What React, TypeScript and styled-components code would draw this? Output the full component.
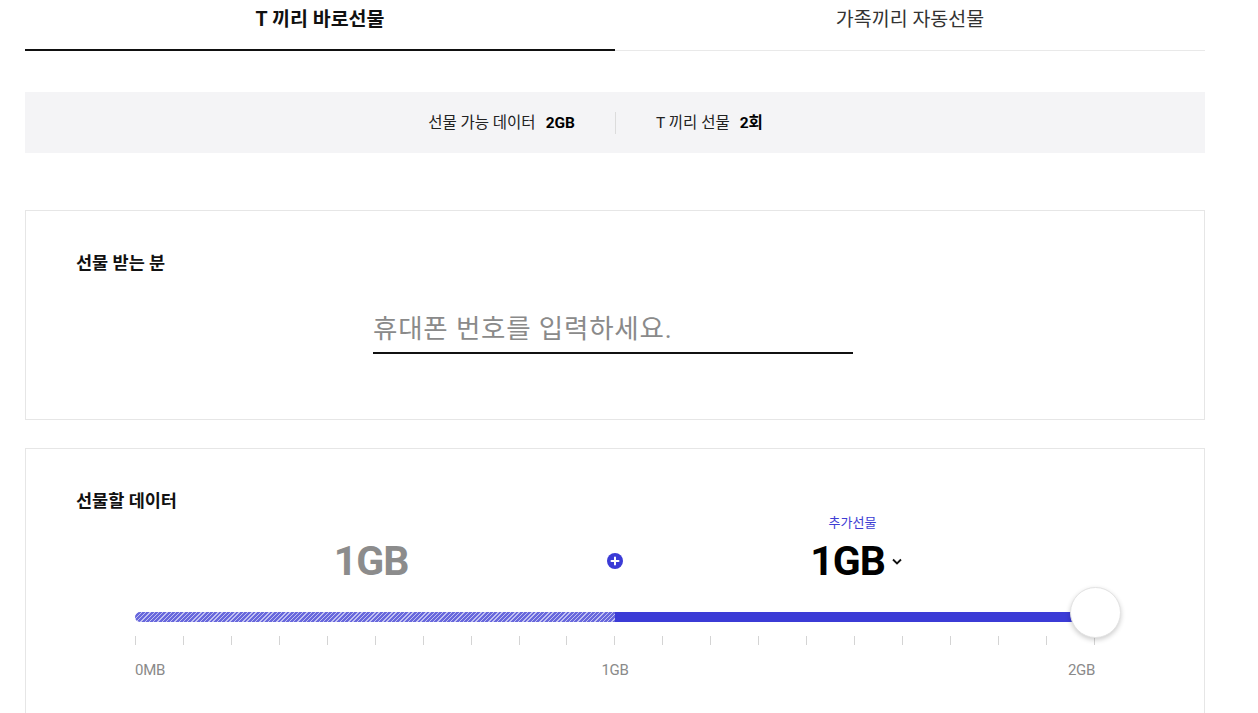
import React from "react";
import styled, { createGlobalStyle } from "styled-components";

const GlobalStyle = createGlobalStyle`
  html, body { margin: 0; padding: 0; background: #fff; }
  body { font-family: Roboto, "Noto Sans CJK KR", "Noto Sans", sans-serif; color: #111; }
  * { box-sizing: border-box; }
`;

const Page = styled.div`
  padding: 0 53px 0 25px;
`;

const Tabs = styled.div`
  display: flex;
  align-items: flex-end;
`;

const Tab = styled.div<{ $active?: boolean }>`
  flex: 1;
  text-align: center;
  font-size: 19.5px;
  line-height: 40px;
  font-weight: ${(p) => (p.$active ? 700 : 400)};
  color: ${(p) => (p.$active ? "#111" : "#333")};
  padding-bottom: ${(p) => (p.$active ? "9px" : "10px")};
  border-bottom: ${(p) => (p.$active ? "2px solid #111" : "1px solid #e9e9e9")};
`;

const InfoBox = styled.div`
  margin-top: 41px;
  height: 61px;
  background: #f4f4f6;
  display: grid;
  grid-template-columns: 1fr 1fr;
  align-items: center;
`;

const InfoItem = styled.div`
  display: flex;
  align-items: center;
  justify-content: flex-end;
  gap: 10px;
  padding: 0 40px;
  font-size: 15.5px;
  line-height: 22px;
  color: #222;
  & + & {
    justify-content: flex-start;
    border-left: 1px solid #dcdcdc;
  }
`;

const InfoValue = styled.b`
  font-weight: 700;
  color: #000;
`;

const Card = styled.section<{ $gap: number }>`
  margin-top: ${(p) => p.$gap}px;
  border: 1px solid #e6e6e6;
  padding: 40px 50px 0;
`;

const CardTitle = styled.h3`
  margin: 0;
  font-size: 17.5px;
  line-height: 24px;
  font-weight: 700;
  color: #111;
`;

const InputWrap = styled.div`
  display: flex;
  justify-content: center;
  padding: 29px 4px 65px 0;
`;

const PhoneInput = styled.input`
  width: 480px;
  height: 50px;
  border: none;
  border-bottom: 2px solid #111;
  outline: none;
  padding: 0;
  font-family: Roboto, "Noto Sans CJK KR", sans-serif;
  font-size: 26.5px;
  letter-spacing: 0.8px;
  color: #111;
  background: transparent;
  &::placeholder {
    color: #8a8a8a;
  }
`;

const DataArea = styled.div`
  width: 960px;
  margin: 2px auto 0;
  padding-bottom: 60px;
`;

const ValueRow = styled.div`
  display: grid;
  grid-template-columns: 1fr 16px 1fr;
  align-items: end;
`;

const ValueCol = styled.div<{ $shift?: number }>`
  display: flex;
  flex-direction: column;
  align-items: center;
  padding-right: ${(p) => p.$shift ?? 0}px;
`;

const Caption = styled.span`
  font-size: 13px;
  line-height: 16px;
  color: #3d3dd4;
  margin-bottom: 7px;
`;

const Amount = styled.div<{ $muted?: boolean }>`
  display: flex;
  align-items: center;
  font-family: Roboto, sans-serif;
  font-weight: 700;
  font-size: 41px;
  line-height: 46px;
  letter-spacing: -1px;
  color: ${(p) => (p.$muted ? "#8c8c8c" : "#000")};
`;

const Chevron = styled.svg`
  width: 12px;
  height: 7px;
  margin-left: 6px;
  margin-right: -8px;
`;

const PlusIcon = styled.svg`
  width: 16px;
  height: 16px;
  margin-bottom: 15px;
`;

const Track = styled.div`
  position: relative;
  margin-top: 28px;
  height: 10px;
  display: flex;
`;

const Striped = styled.div`
  flex: 1;
  border-radius: 5px 0 0 5px;
  background: repeating-linear-gradient(
    -45deg,
    #6868dc 0px,
    #6868dc 2px,
    #c0c0f2 2px,
    #c0c0f2 3px
  );
`;

const Solid = styled.div`
  flex: 1;
  background: #3b3bd6;
`;

const Thumb = styled.div`
  position: absolute;
  right: -26px;
  top: -25px;
  width: 51px;
  height: 51px;
  border-radius: 50%;
  background: #fff;
  border: 1px solid #e3e3e3;
  box-shadow: 0 2px 5px rgba(0, 0, 0, 0.2);
`;

const Ticks = styled.div`
  display: flex;
  justify-content: space-between;
  margin-top: 14px;
`;

const Tick = styled.span`
  width: 1px;
  height: 9px;
  background: #d4d4d4;
`;

const Labels = styled.div`
  display: grid;
  grid-template-columns: 1fr 1fr 1fr;
  margin-top: 15px;
  font-size: 15px;
  line-height: 20px;
  color: #8a8a8a;
  letter-spacing: -0.3px;
`;

const Label = styled.span<{ $align: "left" | "center" | "right" }>`
  text-align: ${(p) => p.$align};
`;

export default function App() {
  return (
    <>
      <GlobalStyle />
      <Page>
        <Tabs>
          <Tab $active>T 끼리 바로선물</Tab>
          <Tab>가족끼리 자동선물</Tab>
        </Tabs>

        <InfoBox>
          <InfoItem>
            선물 가능 데이터 <InfoValue>2GB</InfoValue>
          </InfoItem>
          <InfoItem>
            T 끼리 선물 <InfoValue>2회</InfoValue>
          </InfoItem>
        </InfoBox>

        <Card $gap={57}>
          <CardTitle>선물 받는 분</CardTitle>
          <InputWrap>
            <PhoneInput placeholder="휴대폰 번호를 입력하세요." />
          </InputWrap>
        </Card>

        <Card $gap={28}>
          <CardTitle>선물할 데이터</CardTitle>
          <DataArea>
            <ValueRow>
              <ValueCol>
                <Amount $muted>1GB</Amount>
              </ValueCol>
              <PlusIcon viewBox="0 0 16 16">
                <circle cx="8" cy="8" r="8" fill="#3b3bd6" />
                <path d="M8 4.5v7M4.5 8h7" stroke="#fff" strokeWidth="2" strokeLinecap="round" />
              </PlusIcon>
              <ValueCol $shift={13}>
                <Caption>추가선물</Caption>
                <Amount>
                  1GB
                  <Chevron viewBox="0 0 12 7">
                    <path d="M2 1.5l4 4 4-4" fill="none" stroke="#111" strokeWidth="1.8" />
                  </Chevron>
                </Amount>
              </ValueCol>
            </ValueRow>
            <Track>
              <Striped />
              <Solid />
              <Thumb />
            </Track>
            <Ticks>
              {Array.from({ length: 21 }).map((_, i) => (
                <Tick key={i} />
              ))}
            </Ticks>
            <Labels>
              <Label $align="left">0MB</Label>
              <Label $align="center">1GB</Label>
              <Label $align="right">2GB</Label>
            </Labels>
          </DataArea>
        </Card>
      </Page>
    </>
  );
}
